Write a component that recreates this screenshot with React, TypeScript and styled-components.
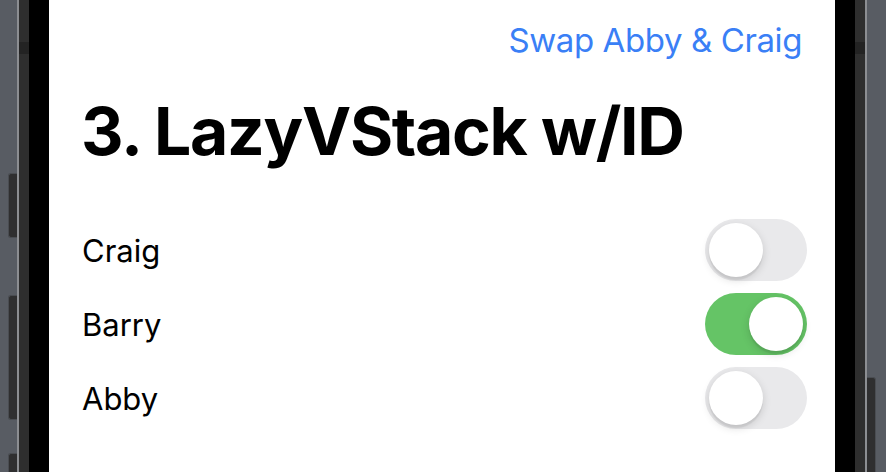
import React, { useState } from "react";
import styled, { createGlobalStyle } from "styled-components";

const Global = createGlobalStyle`
  html, body { margin: 0; padding: 0; background: #585c63; }
  body { font-family: Inter, "Noto Sans", "Liberation Sans", sans-serif; -webkit-font-smoothing: antialiased; }
`;

const Page = styled.div`
  display: flex;
  height: 472px;
  width: 886px;
  overflow: hidden;
  background: #585c63;
`;

const OuterEdge = styled.div<{ $side: "left" | "right" }>`
  width: ${(p) => (p.$side === "left" ? 17 : 19)}px;
  display: flex;
  flex-direction: column;
  align-items: ${(p) => (p.$side === "left" ? "flex-end" : "flex-start")};
`;

const SideButton = styled.div<{ $top: number; $height: number; $side: "left" | "right" }>`
  margin-top: ${(p) => p.$top}px;
  height: ${(p) => p.$height}px;
  width: 9px;
  box-sizing: border-box;
  flex-shrink: 0;
  background: #2f2f30;
  border: 1.5px solid #4a4d52;
  ${(p) => (p.$side === "left" ? "border-right: none;" : "border-left: none;")}
  border-radius: ${(p) => (p.$side === "left" ? "3px 0 0 3px" : "0 3px 3px 0")};
`;

const Rim = styled.div`
  width: 2px;
  background: #8c8e92;
`;

const Band = styled.div`
  width: 10px;
  background: #2e2e2e;
  display: flex;
  flex-direction: column;
`;

const Antenna = styled.div`
  margin-top: 42px;
  height: 12px;
  background: #232323;
`;

const Bezel = styled.div`
  width: 20px;
  background: #000;
`;

const Screen = styled.div`
  flex: 1;
  background: #fff;
  box-sizing: border-box;
  padding: 20px 28px 0 33px;
  display: flex;
  flex-direction: column;
`;

const Toolbar = styled.div`
  display: flex;
  justify-content: flex-end;
  padding-right: 5px;
`;

const LinkButton = styled.button`
  border: none;
  background: none;
  padding: 0;
  font-family: inherit;
  font-size: 33px;
  line-height: 40px;
  color: #3a7ff6;
  letter-spacing: -0.4px;
  cursor: pointer;
`;

const Title = styled.h1`
  margin: 35px 0 0 -1px;
  font-size: 66px;
  line-height: 72px;
  font-weight: 700;
  color: #000;
  letter-spacing: -1.3px;
`;

const List = styled.div`
  margin-top: 52px;
  display: flex;
  flex-direction: column;
  gap: 12px;
`;

const Row = styled.div`
  display: flex;
  align-items: center;
  justify-content: space-between;
  height: 62px;
`;

const Name = styled.span`
  font-size: 31px;
  line-height: 38px;
  color: #000;
  padding-top: 2px;
`;

const Track = styled.button<{ $on: boolean }>`
  width: 102px;
  height: 62px;
  border-radius: 31px;
  border: none;
  padding: 4px;
  box-sizing: border-box;
  display: flex;
  justify-content: ${(p) => (p.$on ? "flex-end" : "flex-start")};
  align-items: center;
  background: ${(p) => (p.$on ? "#65c466" : "#e9e9eb")};
  cursor: pointer;
`;

const Knob = styled.span`
  width: 54px;
  height: 54px;
  border-radius: 50%;
  background: #fff;
  box-shadow: 0 3px 8px rgba(0, 0, 0, 0.15), 0 3px 1px rgba(0, 0, 0, 0.06);
`;

function Toggle({ on, onClick }: { on: boolean; onClick: () => void }) {
  return (
    <Track $on={on} onClick={onClick} aria-pressed={on}>
      <Knob />
    </Track>
  );
}

export default function App() {
  const [people, setPeople] = useState([
    { name: "Craig", on: false },
    { name: "Barry", on: true },
    { name: "Abby", on: false },
  ]);

  const swap = () => {
    setPeople((ps) => {
      const next = [...ps];
      const a = next.findIndex((p) => p.name === "Abby");
      const c = next.findIndex((p) => p.name === "Craig");
      [next[a], next[c]] = [next[c], next[a]];
      return next;
    });
  };

  return (
    <>
      <Global />
      <Page>
        <OuterEdge $side="left">
          <SideButton $side="left" $top={173} $height={65} />
          <SideButton $side="left" $top={57} $height={125} />
          <SideButton $side="left" $top={33} $height={40} />
        </OuterEdge>
        <Rim />
        <Band>
          <Antenna />
        </Band>
        <Bezel />
        <Screen>
          <Toolbar>
            <LinkButton onClick={swap}>Swap Abby &amp; Craig</LinkButton>
          </Toolbar>
          <Title>3. LazyVStack w/ID</Title>
          <List>
            {people.map((p, i) => (
              <Row key={p.name}>
                <Name>{p.name}</Name>
                <Toggle
                  on={p.on}
                  onClick={() =>
                    setPeople((ps) => ps.map((q, j) => (j === i ? { ...q, on: !q.on } : q)))
                  }
                />
              </Row>
            ))}
          </List>
        </Screen>
        <Bezel />
        <Band>
          <Antenna />
        </Band>
        <Rim />
        <OuterEdge $side="right">
          <SideButton $side="right" $top={377} $height={120} />
        </OuterEdge>
      </Page>
    </>
  );
}
